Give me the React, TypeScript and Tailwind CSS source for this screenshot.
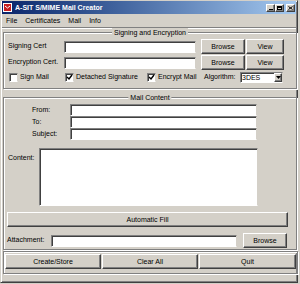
import React from "react";

const fieldCls =
  "bg-white border-t border-l border-b border-r border-t-[#808080] border-l-[#808080] border-b-[#ffffff] border-r-[#d4d0c8] shadow-[inset_1px_1px_0_#404040]";
const btnCls =
  "bg-[#d4d0c8] border border-t-white border-l-white border-r-[#404040] border-b-[#404040] shadow-[inset_-1px_-1px_0_#808080] flex items-center justify-center leading-none";

function Panel({
  title,
  className,
  children,
}: {
  title?: string;
  className: string;
  children: React.ReactNode;
}) {
  return (
    <div
      className={`relative border border-[#808080] shadow-[inset_1px_1px_0_#ffffff,1px_1px_0_#ffffff] ${className}`}
    >
      {title && (
        <span className="absolute left-1/2 -translate-x-1/2 top-[-5px] px-[2px] bg-[#d4d0c8] leading-[9px] whitespace-nowrap">
          {title}
        </span>
      )}
      {children}
    </div>
  );
}

function CheckBox({ checked }: { checked: boolean }) {
  return (
    <div className={`w-[9px] h-[9px] ${fieldCls} flex items-center justify-center shrink-0`}>
      {checked && (
        <svg width="7" height="7" viewBox="0 0 7 7">
          <path d="M1 3 L3 5 L6 1" stroke="#000" strokeWidth="1.4" fill="none" />
        </svg>
      )}
    </div>
  );
}

export default function App() {
  return (
    <div className="w-[300px] h-[284px] bg-[#d4d0c8] font-['Liberation_Sans',Arial,sans-serif] text-[7px] text-black overflow-hidden">
      <div className="w-[298px] h-[283px] border border-t-[#d4d0c8] border-l-[#d4d0c8] border-r-[#404040] border-b-[#404040] shadow-[inset_1px_1px_0_#ffffff,inset_-1px_-1px_0_#808080] flex flex-col">
        {/* Title bar */}
        <div className="mx-[1px] mt-[0px] h-[13px] flex items-center bg-gradient-to-r from-[#0a246a] to-[#a6caf0]">
          <div className="ml-[1px] w-[9px] h-[9px] flex items-center justify-center">
            <svg width="9" height="9" viewBox="0 0 9 9">
              <rect x="0" y="0" width="9" height="9" fill="#ffffff" />
              <rect x="1" y="1" width="7" height="7" fill="#c81e1e" />
              <path d="M2 3 L4.5 5 L7 3" stroke="#fff" strokeWidth="1" fill="none" />
            </svg>
          </div>
          <span className="ml-[3px] text-white font-bold text-[7px] leading-none whitespace-nowrap">
            A-SIT S/MIME Mail Creator
          </span>
          <div className="ml-auto mr-[1px] flex items-center">
            <div className={`${btnCls} w-[9px] h-[8px]`}>
              <div className="w-[4px] h-[1px] bg-black mt-[4px]" />
            </div>
            <div className={`${btnCls} w-[9px] h-[8px]`}>
              <div className="w-[5px] h-[4px] border border-black border-t-2" />
            </div>
            <div className={`${btnCls} w-[9px] h-[8px] ml-[2px]`}>
              <svg width="5" height="4" viewBox="0 0 5 4">
                <path d="M0.5 0.5 L4.5 3.5 M4.5 0.5 L0.5 3.5" stroke="#000" strokeWidth="1" />
              </svg>
            </div>
          </div>
        </div>
        {/* Menu */}
        <div className="h-[13px] flex items-center pl-[5px] gap-[8px] leading-none">
          <span>File</span>
          <span>Certificates</span>
          <span>Mail</span>
          <span>Info</span>
        </div>
        <div className="h-[1px] bg-[#808080] mx-[1px]" />
        <div className="h-[1px] bg-white mx-[1px]" />

        {/* Panel 1 */}
        <Panel title="Signing and Encryption" className="ml-[2px] mt-[3px] w-[294px] h-[57px] shrink-0">
          <div className="flex flex-col pt-[6px]">
            <div className="flex items-center h-[15px]">
              <span className="ml-[4px] w-[56px]">Signing Cert</span>
              <div className={`${fieldCls} w-[132px] h-[12px]`} />
              <div className={`${btnCls} ml-[5px] w-[44px] h-[15px]`}>Browse</div>
              <div className={`${btnCls} ml-[1px] w-[38px] h-[15px]`}>View</div>
            </div>
            <div className="flex items-center h-[15px] mt-[1px]">
              <span className="ml-[4px] w-[56px]">Encryption Cert.</span>
              <div className={`${fieldCls} w-[132px] h-[12px]`} />
              <div className={`${btnCls} ml-[5px] w-[44px] h-[15px]`}>Browse</div>
              <div className={`${btnCls} ml-[1px] w-[38px] h-[15px]`}>View</div>
            </div>
            <div className="flex items-center h-[11px] mt-[2px] whitespace-nowrap">
              <div className="ml-[5px] w-[56px] flex items-center gap-[2px]">
                <CheckBox checked={false} />
                <span>Sign Mail</span>
              </div>
              <div className="w-[82px] flex items-center gap-[2px]">
                <CheckBox checked={true} />
                <span>Detached Signature</span>
              </div>
              <div className="w-[57px] flex items-center gap-[2px]">
                <CheckBox checked={true} />
                <span>Encrypt Mail</span>
              </div>
              <span className="w-[36px]">Algorithm:</span>
              <div className={`${fieldCls} w-[43px] h-[11px] flex items-center`}>
                <span className="ml-[1px] flex-1 leading-none">3DES</span>
                <div className={`${btnCls} w-[8px] h-[9px]`}>
                  <svg width="5" height="3" viewBox="0 0 5 3">
                    <path d="M0 0 L5 0 L2.5 3 Z" fill="#000" />
                  </svg>
                </div>
              </div>
            </div>
          </div>
        </Panel>

        {/* Panel 2 */}
        <Panel title="Mail Content" className="ml-[2px] mt-[8px] w-[294px] h-[153px] shrink-0">
          <div className="flex flex-col pt-[6px]">
            {["From:", "To:", "Subject:"].map((l) => (
              <div key={l} className="flex items-center h-[12px]">
                <span className="ml-[28px] w-[38px]">{l}</span>
                <div className={`${fieldCls} w-[187px] h-[12px]`} />
              </div>
            ))}
            <div className="flex mt-[8px]">
              <span className="ml-[4px] w-[31px] mt-[6px] leading-none">Content:</span>
              <div className={`${fieldCls} w-[219px] h-[58px]`} />
            </div>
            <div className={`${btnCls} ml-[3px] mt-[6px] w-[281px] h-[15px]`}>Automatic Fill</div>
            <div className="flex items-center h-[15px] mt-[6px]">
              <span className="ml-[3px] w-[44px]">Attachment:</span>
              <div className={`${fieldCls} w-[186px] h-[12px]`} />
              <div className={`${btnCls} ml-[6px] w-[44px] h-[15px]`}>Browse</div>
            </div>
          </div>
        </Panel>

        {/* Bottom buttons */}
        <Panel className="ml-[2px] mt-[1px] w-[295px] h-[23px] shrink-0">
          <div className="flex mt-[2px] ml-[1px]">
            <div className={`${btnCls} w-[96px] h-[15px]`}>Create/Store</div>
            <div className={`${btnCls} ml-[1px] w-[96px] h-[15px]`}>Clear All</div>
            <div className={`${btnCls} ml-[1px] w-[97px] h-[15px]`}>Quit</div>
          </div>
        </Panel>
      </div>
    </div>
  );
}
